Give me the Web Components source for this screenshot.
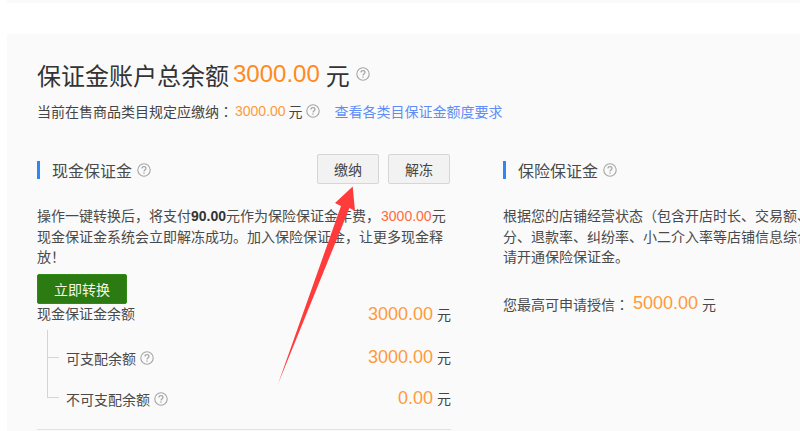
<!DOCTYPE html>
<html lang="zh">
<head>
<meta charset="utf-8">
<title>保证金账户</title>
<style>
html, body { margin: 0; height: 431px; overflow: hidden; background: #fff; }
body { font-family: "Liberation Sans", "Noto Sans CJK SC", sans-serif; color: #3c3c3c; font-size: 14px; }
</style>
</head>
<body>
<bond-page>
  <div slot="title">保证金账户总余额</div>
  <bond-section slot="left" heading="现金保证金">
    <bond-button slot="actions">缴纳</bond-button>
    <bond-button slot="actions">解冻</bond-button>
    <cash-body></cash-body>
  </bond-section>
  <bond-section slot="right" heading="保险保证金">
    <insurance-body></insurance-body>
  </bond-section>
</bond-page>

<script>
const FONT = '"Liberation Sans", "Noto Sans CJK SC", sans-serif';
// the reference centres these marks in their cell, the TC cut does that too
const PUNCT = 'i { font-style: normal; line-height: 0; font-family: "Noto Sans CJK TC", sans-serif; }';
const zh = (s) => s.replace(/[，：！（]/g, '<i>$&</i>');

class HelpIcon extends HTMLElement {
    constructor() {
        super();
        this.attachShadow({ mode: 'open' });
    }
    connectedCallback() {
        const size = this.getAttribute('size') || 14;
        this.shadowRoot.innerHTML = `
            <style>
                :host { display: inline-flex; vertical-align: middle; }
                svg { display: block; }
            </style>
            <svg width="${size}" height="${size}" viewBox="0 0 14 14" fill="none" stroke="#a6a6a6">
                <circle cx="7" cy="7" r="6.2" stroke-width="1.1"/>
                <path d="M5 5.5C5 4.3 5.9 3.7 7 3.7S9 4.4 9 5.4C9 6.7 7 6.8 7 8.4" stroke-width="1.2"/>
                <path d="M7 9.5V10.8" stroke-width="1.3"/>
            </svg>
        `;
    }
}
customElements.define('help-icon', HelpIcon);

class BondButton extends HTMLElement {
    constructor() {
        super();
        this.attachShadow({ mode: 'open' });
        this.shadowRoot.innerHTML = `
            <style>
                :host {
                    display: flex;
                    justify-content: center;
                    align-items: center;
                    width: 60px;
                    height: 28px;
                    background: #f2f2f2;
                    border: 1px solid #d6d6d6;
                    border-radius: 2px;
                    font-size: 14px;
                    color: #444;
                }
            </style>
            <slot></slot>
        `;
    }
}
customElements.define('bond-button', BondButton);

class BondSection extends HTMLElement {
    constructor() {
        super();
        this.attachShadow({ mode: 'open' });
    }
    connectedCallback() {
        const heading = this.getAttribute('heading') || '';
        this.shadowRoot.innerHTML = `
            <style>
                :host { display: block; }
                .head { display: flex; align-items: center; height: 32px; }
                .bar { width: 3px; height: 18px; background: #2f86f6; margin-right: 12px; }
                .title { font-size: 16px; color: #4a4a4a; margin-right: 5px; }
                .actions { margin-left: auto; display: flex; gap: 9px; margin-right: 1px; margin-top: -2px; }
            </style>
            <div class="head">
                <span class="bar"></span>
                <span class="title">${heading}</span>
                <help-icon></help-icon>
                <div class="actions"><slot name="actions"></slot></div>
            </div>
            <slot></slot>
        `;
    }
}
customElements.define('bond-section', BondSection);

class AmountRow extends HTMLElement {
    constructor() {
        super();
        this.attachShadow({ mode: 'open' });
    }
    connectedCallback() {
        const amount = this.getAttribute('amount');
        this.shadowRoot.innerHTML = `
            <style>
                :host { display: flex; justify-content: space-between; align-items: center; }
                .label { display: flex; align-items: center; gap: 4px; color: #4a4a4a; }
                :host(.top) .label { margin-top: -4px; }
                .value { color: #444; }
                b { font-weight: normal; font-size: 18px; color: #ff9a3c; margin-right: 4px; }
            </style>
            <div class="label"><slot></slot></div>
            <div class="value"><b>${amount}</b>元</div>
        `;
    }
}
customElements.define('amount-row', AmountRow);

class CashBody extends HTMLElement {
    constructor() {
        super();
        this.attachShadow({ mode: 'open' });
        this.shadowRoot.innerHTML = `
            <style>
                ${PUNCT}
                :host { display: block; width: 414px; }
                p { margin: 20px 0 6px; line-height: 20.5px; color: #4a4a4a; }
                b { color: #333; }
                .red { color: #ff6a3c; margin-left: 1px; }
                .convert {
                    display: flex;
                    justify-content: center;
                    align-items: center;
                    width: 88px;
                    height: 28px;
                    background: #2b7a12;
                    border: 1px solid #2f8a16;
                    border-radius: 2px;
                    color: #f4f8e8;
                    font-size: 14px;
                }
                amount-row.top { height: 22px; }
                .tree { position: relative; margin-left: 10px; height: 76px; }
                .tree .line { position: absolute; left: 0; top: 4px; width: 1px; height: 67px; background: #d4d4d4; }
                .tree .tick { position: absolute; left: 0; width: 12px; height: 1px; background: #d4d4d4; }
                .tree amount-row { position: absolute; left: 19px; right: 0; height: 22px; }
                .rule { height: 1px; background: #e2e2e2; margin-top: 27px; }
            </style>
            <p>${zh('操作一键转换后，将支付<b>90.00</b>元作为保险保证金年费，<span class="red">3000.00</span>元<br>现金保证金系统会立即解冻成功。加入保险保证金，让更多现金释<br>放！')}</p>
            <div class="convert">立即转换</div>
            <amount-row class="top" amount="3000.00">现金保证金余额</amount-row>
            <div class="tree">
                <span class="line"></span>
                <span class="tick" style="top:31px"></span>
                <span class="tick" style="top:71px"></span>
                <amount-row style="top:21px" amount="3000.00">可支配余额 <help-icon></help-icon></amount-row>
                <amount-row style="top:62px" amount="0.00">不可支配余额 <help-icon></help-icon></amount-row>
            </div>
            <div class="rule"></div>
        `;
    }
}
customElements.define('cash-body', CashBody);

class InsuranceBody extends HTMLElement {
    constructor() {
        super();
        this.attachShadow({ mode: 'open' });
        this.shadowRoot.innerHTML = `
            <style>
                ${PUNCT}
                :host { display: block; white-space: nowrap; color: #4a4a4a; }
                p { margin: 20px 0 0; line-height: 20.5px; }
                .limit { margin-top: 24px; display: flex; align-items: center; height: 24px; }
                b { font-weight: normal; font-size: 18px; color: #ff9a3c; margin: 0 4px 0 4px; }
            </style>
            <p>${zh('根据您的店铺经营状态（包含开店时长、交易额、信用评<br>分、退款率、纠纷率、小二介入率等店铺信息综合评估，<br>请开通保险保证金。')}</p>
            <div class="limit">${zh('您最高可申请授信：')}<b>5000.00</b>元</div>
        `;
    }
}
customElements.define('insurance-body', InsuranceBody);

class BondPage extends HTMLElement {
    constructor() {
        super();
        this.attachShadow({ mode: 'open' });
        this.shadowRoot.innerHTML = `
            <style>
                ${PUNCT}
                :host { display: block; position: relative; height: 431px; overflow: hidden; font-family: ${FONT}; }
                .strip { height: 3px; margin: 0 0 31px 7px; background: #fafafa; }
                .panel { margin-left: 7px; padding: 23px 0 0 30px; height: 374px; background: #fafafa; }
                .total { display: flex; align-items: center; height: 34px; font-size: 24px; color: #333; }
                .total b { font-weight: normal; color: #ff8a1e; margin: 0 6px 0 4px; }
                .total help-icon { margin-left: 6px; }
                .sub { display: flex; align-items: center; height: 20px; margin-top: 10px; color: #444; }
                .sub b { font-weight: normal; color: #ff9a3c; margin-right: 3px; margin-left: 2px; }
                .sub help-icon { margin-left: 3px; }
                .sub a { margin-left: 15px; color: #5f8df5; }
                .cols { display: flex; gap: 52px; margin-top: 33px; }
                .left { flex: 0 0 414px; }
                .right { flex: 0 0 414px; }
                svg.arrow { position: absolute; left: 0; top: 0; pointer-events: none; }
            </style>
            <div class="strip"></div>
            <div class="panel">
                <div class="total"><slot name="title"></slot><b>3000.00</b>元<help-icon></help-icon></div>
                <div class="sub">${zh('当前在售商品类目规定应缴纳：')}<b>3000.00</b>元<help-icon></help-icon><a>查看各类目保证金额度要求</a></div>
                <div class="cols">
                    <div class="left"><slot name="left"></slot></div>
                    <div class="right"><slot name="right"></slot></div>
                </div>
            </div>
            <svg class="arrow" width="800" height="431" viewBox="0 0 800 431">
                <polygon fill="#ff3b3b" points="352.7,186.5 355,211 349.5,208 278,384 341,206 335,203"/>
            </svg>
        `;
    }
}
customElements.define('bond-page', BondPage);
</script>
</body>
</html>
